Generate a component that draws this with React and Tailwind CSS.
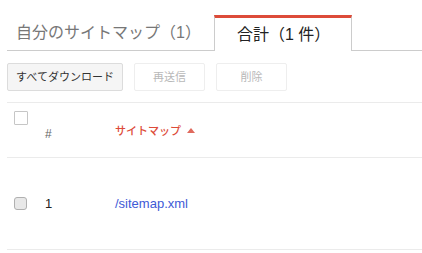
const FONT = "font-['Liberation_Sans','Noto_Sans_CJK_JP',sans-serif]";

function Tabs() {
    return (
        <div className="ml-[7px] flex h-[51px] items-end border-b border-[#cccccc]">
            <div className="flex h-[35px] items-center pl-[9px] pr-[13px] text-[16px] text-[#777777]">
                自分のサイトマップ（1）
            </div>
            <div className="-mb-px flex h-[36px] w-[138px] items-center border-x border-t-[3px] border-x-[#cccccc] border-t-[#dd4b39] bg-white pl-[22px] text-[16px] text-[#222222]">
                合計（1 件）
            </div>
        </div>
    );
}

function Toolbar() {
    return (
        <div className="ml-[7px] flex h-[52px] items-center gap-[11px] border-b border-[#ebebeb] pt-[1px]">
            <button className="h-[28px] w-[116px] rounded-[2px] border border-[#dcdcdc] bg-[#f5f5f5] text-[11px] text-[#333333]">
                すべてダウンロード
            </button>
            <button className="h-[28px] w-[71px] rounded-[2px] border border-[#eeeeee] bg-white text-[11px] text-[#b8b8b8]">
                再送信
            </button>
            <button className="h-[28px] w-[71px] rounded-[2px] border border-[#eeeeee] bg-white text-[11px] text-[#b8b8b8]">
                削除
            </button>
        </div>
    );
}

export default function App() {
    return (
        <div className={`h-[253px] w-[422px] overflow-hidden bg-white ${FONT}`}>
            <Tabs />
            <Toolbar />
            <div className="ml-[7px] flex h-[55px] border-b border-[#ebebeb]">
                <div className="w-[38px] pl-[7px] pt-[8px]">
                    <span className="block h-[14px] w-[14px] rounded-[1px] border border-[#c6c6c6] bg-white" />
                </div>
                <div className="w-[70px] pt-[22px] text-[12px] text-[#666666]">#</div>
                <div className="flex pt-[20px] text-[11px] font-medium text-[#dd4b39]">
                    <span>サイトマップ</span>
                    <svg className="ml-[6px] mt-[5px]" width="8" height="5" viewBox="0 0 8 5">
                        <path d="M0 5 L4 0 L8 5 Z" fill="#e06a5d" />
                    </svg>
                </div>
            </div>
            <div className="ml-[7px] flex h-[92px] items-center border-b border-[#ebebeb]">
                <div className="w-[38px] pl-[7px]">
                    <span className="block h-[13px] w-[13px] rounded-[3px] border border-[#b0b0b0] bg-[#e8e8e8]" />
                </div>
                <div className="w-[70px] text-[13px] text-[#222222]">1</div>
                <div className="text-[13px] text-[#3e5ad6]">/sitemap.xml</div>
            </div>
        </div>
    );
}
